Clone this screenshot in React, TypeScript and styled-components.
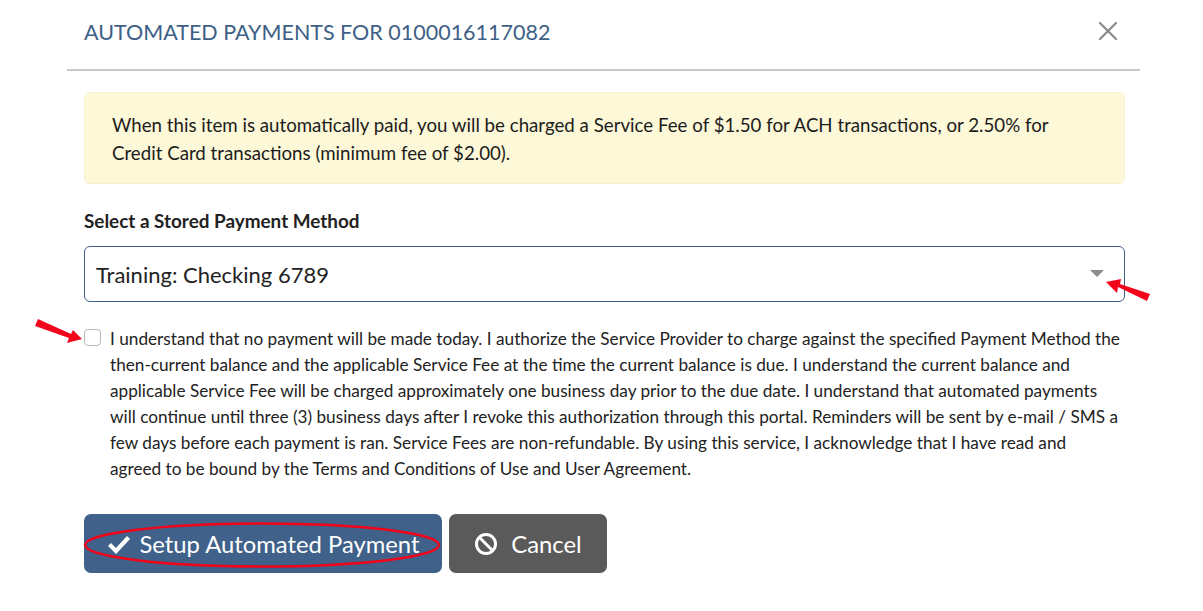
import React from "react";
import styled, { createGlobalStyle } from "styled-components";

const Global = createGlobalStyle`
  html, body { margin: 0; padding: 0; background: #fff; }
  body { font-family: Lato, "Open Sans", sans-serif; color: #222; }
`;

const Page = styled.div`
  position: relative;
  width: 1203px;
  height: 611px;
  overflow: hidden;
`;

const Modal = styled.div`
  margin-left: 67px;
  width: 1073px;
`;

const Header = styled.div`
  display: flex;
  align-items: center;
  justify-content: space-between;
  padding: 0 22px 0 17px;
  border-bottom: 2px solid #c8c8c8;
  box-sizing: border-box;
  height: 71px;
`;

const Title = styled.h4`
  margin: 0;
  margin-top: -6px;
  font-size: 21.5px;
  font-weight: 400;
  color: #3e5f86;
`;

const Close = styled.button`
  border: 0;
  background: none;
  padding: 0;
  margin-top: -8px;
  width: 20px;
  height: 20px;
  display: flex;
`;

const Body = styled.div`
  padding: 21px 15px 0 17px;
`;

const Alert = styled.div`
  background: #fdf8d8;
  border: 1px solid #f8f1cf;
  border-radius: 6px;
  padding: 18px 27px 16px;
  font-size: 18.7px;
  line-height: 28px;
  color: #1c1c1c;
`;

const Label = styled.div`
  margin-top: 24px;
  font-size: 18.9px;
  font-weight: 700;
  line-height: 26px;
  color: #222;
`;

const Select = styled.div`
  margin-top: 12px;
  height: 56px;
  box-sizing: border-box;
  border: 1.5px solid #3e5f86;
  border-radius: 6px;
  display: flex;
  align-items: center;
  justify-content: space-between;
  padding: 0 20px 0 11px;
  font-size: 22px;
  color: #222;
`;

const Agree = styled.label`
  display: flex;
  gap: 9px;
  margin-top: 24px;
  padding-right: 4px;
  font-size: 17.2px;
  line-height: 26px;
  color: #222;
`;

const Box = styled.span`
  flex: none;
  width: 17px;
  height: 17px;
  margin-top: 3px;
  border: 1.5px solid #b8b8b8;
  border-radius: 4px;
  box-sizing: border-box;
  background: #fff;
`;

const Actions = styled.div`
  display: flex;
  gap: 7px;
  margin-top: 32px;
`;

const Btn = styled.button<{ $tone: "primary" | "muted"; $w: number }>`
  height: 59px;
  width: ${(p) => p.$w}px;
  border: 0;
  border-radius: 7px;
  background: ${(p) => (p.$tone === "primary" ? "#40618a" : "#5a5a5a")};
  color: #fff;
  font-family: Lato, sans-serif;
  font-size: 23.8px;
  display: flex;
  align-items: center;
  justify-content: center;
  gap: 9px;
  padding: 0;
`;

const Overlay = styled.svg`
  position: absolute;
  left: 0;
  top: 0;
  pointer-events: none;
`;

export default function App() {
  return (
    <Page>
      <Global />
      <Modal>
        <Header>
          <Title>AUTOMATED PAYMENTS FOR 0100016117082</Title>
          <Close aria-label="close">
            <svg width="20" height="20" viewBox="0 0 20 20">
              <path d="M2 2 L18 18 M18 2 L2 18" stroke="#8a8a8a" strokeWidth="2.2" strokeLinecap="round" />
            </svg>
          </Close>
        </Header>
        <Body>
          <Alert>
            When this item is automatically paid, you will be charged a Service Fee of $1.50 for ACH transactions, or 2.50% for
            <br />
            Credit Card transactions (minimum fee of $2.00).
          </Alert>
          <Label>Select a Stored Payment Method</Label>
          <Select>
            <span>Training: Checking 6789</span>
            <svg width="14" height="8" viewBox="0 0 14 8">
              <path d="M0 0 L14 0 L7 7 Z" fill="#8c8c8c" />
            </svg>
          </Select>
          <Agree>
            <Box />
            <span>
              I understand that no payment will be made today. I authorize the Service Provider to charge against the specified Payment Method the then-current balance and the applicable Service Fee at the time the current balance is due. I understand the current balance and applicable Service Fee will be charged approximately one business day prior to the due date. I understand that automated payments will continue until three (3) business days after I revoke this authorization through this portal. Reminders will be sent by e-mail / SMS a few days before each payment is ran. Service Fees are non-refundable. By using this service, I acknowledge that I have read and agreed to be bound by the Terms and Conditions of Use and User Agreement.
            </span>
          </Agree>
          <Actions>
            <Btn $tone="primary" $w={358}>
              <svg width="24" height="20" viewBox="0 0 24 20">
                <path d="M2.5 10.5 L9 17 L21.5 3.5" fill="none" stroke="#fff" strokeWidth="4.2" strokeLinejoin="miter" />
              </svg>
              Setup Automated Payment
            </Btn>
            <Btn $tone="muted" $w={158}>
              <svg width="24" height="24" viewBox="0 0 24 24">
                <circle cx="12" cy="12" r="9.5" fill="none" stroke="#fff" strokeWidth="3" />
                <path d="M5.3 5.3 L18.7 18.7" stroke="#fff" strokeWidth="3" />
              </svg>
              <span style={{ marginLeft: 4 }}>Cancel</span>
            </Btn>
          </Actions>
        </Body>
      </Modal>
      <Overlay width="1203" height="611" viewBox="0 0 1203 611">
        <g fill="#f2051b">
          <path d="M1150 294 L1147 301 L1118 287 L1117 293 L1106 282 L1121 279 L1120 284 Z" />
          <path d="M38 319 L35 326 L69 338 L67 343 L82 339 L73 330 L71 334 Z" />
        </g>
        <ellipse cx="262" cy="545" rx="177" ry="21.5" fill="none" stroke="#f2051b" strokeWidth="2.5" />
      </Overlay>
    </Page>
  );
}
